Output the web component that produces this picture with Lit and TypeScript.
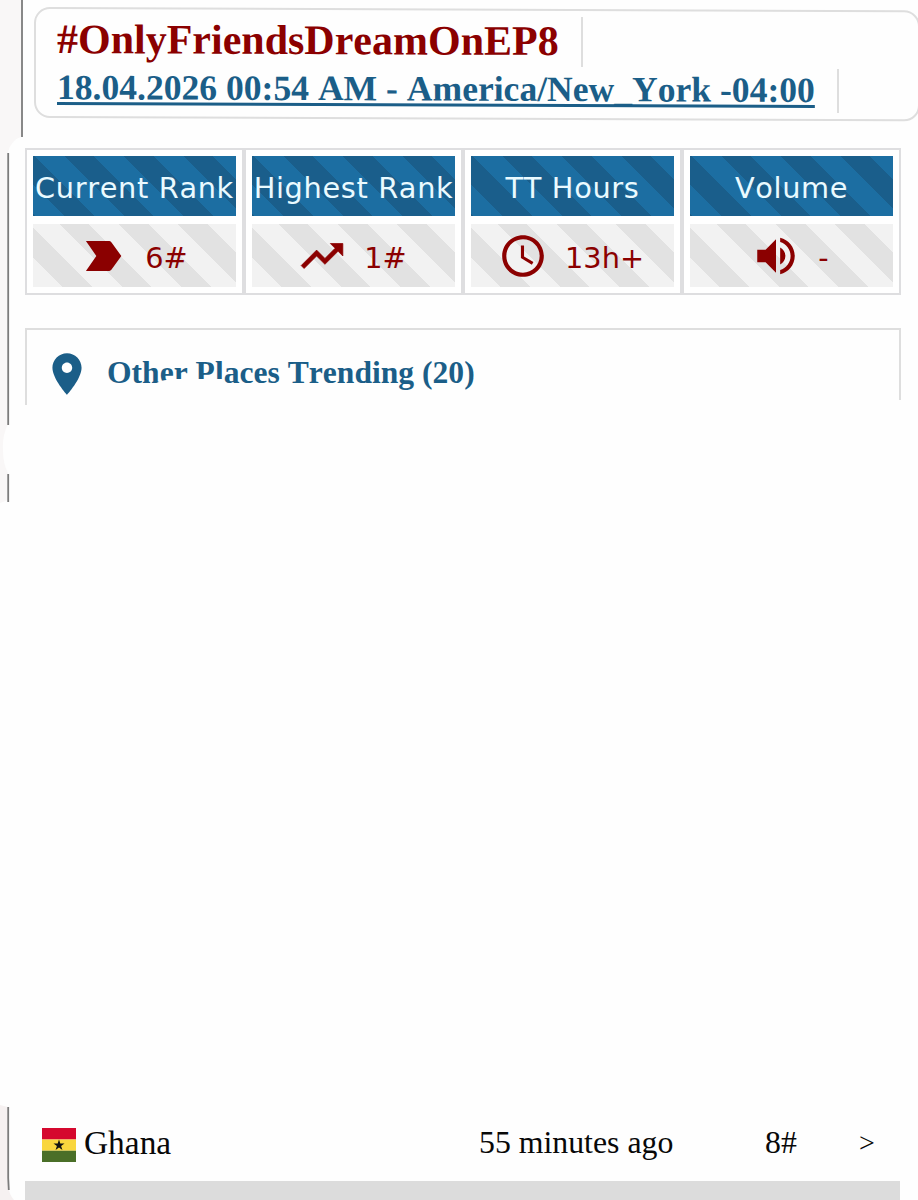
import { LitElement, html, svg, css, TemplateResult } from 'lit';
import { customElement, property } from 'lit/decorators.js';

type IconName = 'label' | 'trend' | 'clock' | 'volume' | 'pin';

interface Stat {
    title: string;
    icon: IconName;
    value: string;
}

interface Place {
    name: string;
    ago: string;
    rank: string;
}

const STATS: Stat[] = [
    { title: 'Current Rank', icon: 'label', value: '6#' },
    { title: 'Highest Rank', icon: 'trend', value: '1#' },
    { title: 'TT Hours', icon: 'clock', value: '13h+' },
    { title: 'Volume', icon: 'volume', value: '-' },
];

const PLACES: Place[] = [{ name: 'Ghana', ago: '55 minutes ago', rank: '8#' }];

// 24x24 grid
const ICONS: Record<IconName, TemplateResult> = {
    label: svg`<path d="M3.8 19.2l5-7.2-5-7.2h10.8c.7 0 1.1.2 1.5.7L20.8 12l-4.7 6.5c-.4.5-.8.7-1.5.7z"/>`,
    trend: svg`<path stroke="currentColor" stroke-width=".35" d="M16 6l2.29 2.29-4.88 4.88-4-4L2 16.59 3.41 18l6-6 4 4 6.3-6.29L22 12V6z"/>`,
    clock: svg`<path d="M11.99 2C6.47 2 2 6.48 2 12s4.47 10 9.99 10C17.52 22 22 17.52 22 12S17.52 2 11.99 2zM12 20c-4.42 0-8-3.58-8-8s3.58-8 8-8 8 3.58 8 8-3.58 8-8 8zm.5-13H11v6l5.25 3.15.75-1.23-4.5-2.67z"/>`,
    volume: svg`<path d="M3 9v6h4l5 5V4L7 9H3zm13.5 3c0-1.77-1.02-3.29-2.5-4.03v8.05c1.48-.73 2.5-2.25 2.5-4.02zM14 3.23v2.06c2.89.86 5 3.54 5 6.71s-2.11 5.85-5 6.71v2.06c4.01-.91 7-4.49 7-8.77s-2.99-7.86-7-8.77z"/>`,
    pin: svg`<path d="M12 2C8.13 2 5 5.13 5 9c0 5.25 7 13 7 13s7-7.75 7-13c0-3.87-3.13-7-7-7zm0 9.5c-1.38 0-2.5-1.12-2.5-2.5s1.12-2.5 2.5-2.5 2.5 1.12 2.5 2.5-1.12 2.5-2.5 2.5z"/>`,
};

@customElement('trend-icon')
export class TrendIcon extends LitElement {
    @property() name: IconName = 'label';

    static styles = css`
        :host {
            display: block;
            width: 50px;
            height: 50px;
        }

        svg {
            display: block;
            width: 100%;
            height: 100%;
            fill: currentColor;
        }
    `;

    render() {
        return html`<svg viewBox="0 0 24 24">${ICONS[this.name]}</svg>`;
    }
}

@customElement('stat-cell')
export class StatCell extends LitElement {
    @property() heading = '';
    @property() icon: IconName = 'label';
    @property() value = '';

    static styles = css`
        :host {
            display: flex;
            flex-direction: column;
            gap: 8px;
            box-sizing: border-box;
            min-width: 0;
            padding: 6px;
            border: 2px solid #dedee0;
            background: #fff;
            font-family: Verdana, 'DejaVu Sans', sans-serif;
            font-size: 28.8px;
            white-space: nowrap;
        }

        .title {
            display: flex;
            align-items: center;
            justify-content: center;
            height: 60px;
            padding-top: 3px;
            box-sizing: border-box;
            letter-spacing: 0.65px;
            color: #eafaff;
            background: repeating-linear-gradient(
                45deg,
                #1a5e8b 0 1.5px,
                #1c6ea2 1.5px 22.5px,
                #1a5e8b 22.5px 42px
            );
        }

        .value {
            display: flex;
            align-items: center;
            justify-content: center;
            gap: 17px;
            box-sizing: border-box;
            height: 63px;
            padding-right: 3px;
            color: #8b0000;
            background: repeating-linear-gradient(
                45deg,
                #f2f2f2 0 21px,
                #e2e2e2 21px 42px
            );
        }

        .value span {
            padding-top: 5px;
        }
    `;

    render() {
        return html`
            <div class="title">${this.heading}</div>
            <div class="value">
                <trend-icon .name=${this.icon}></trend-icon>
                <span>${this.value}</span>
            </div>
        `;
    }
}

@customElement('app-root')
export class AppRoot extends LitElement {
    static styles = css`
        :host {
            display: grid;
            grid-template-columns: 25px 1fr;
            width: 918px;
            height: 1200px;
            overflow: hidden;
            background: #fefefe;
            font-family: 'Liberation Serif', 'Times New Roman', serif;
            font-kerning: none;
        }

        .edge {
            display: block;
            width: 25px;
            height: 1200px;
        }

        main {
            display: flex;
            flex-direction: column;
            min-width: 0;
            height: 1200px;
        }

        /* the whole header card leans slightly to the right */
        .header {
            display: flex;
            flex-direction: column;
            align-items: flex-start;
            box-sizing: border-box;
            flex: none;
            width: 886px;
            height: 111px;
            margin: 7px 0 0 9px;
            padding: 6px 0 0 21px;
            border: 2px solid #dedede;
            border-radius: 16px;
            transform: skewY(0.22deg);
            transform-origin: left;
            font-weight: bold;
            white-space: nowrap;
        }

        .hashtag,
        .date {
            border-right: 2px solid #dedede;
        }

        .hashtag {
            height: 50px;
            padding-right: 22px;
            line-height: 48px;
            font-size: 42px;
            color: #8b0000;
        }

        .date {
            height: 44px;
            margin-top: 1px;
            padding-right: 22px;
            line-height: 42px;
            font-size: 35.6px;
            color: #1b5e88;
        }

        .date a {
            text-decoration: underline;
            text-decoration-thickness: 2.5px;
            text-underline-offset: 3px;
            text-decoration-skip-ink: none;
        }

        .stats {
            display: grid;
            grid-template-columns: repeat(4, 1fr);
            flex: none;
            width: 876px;
            height: 147px;
            margin-top: 30px;
        }

        .places {
            position: relative;
            display: flex;
            align-items: flex-start;
            gap: 15px;
            box-sizing: border-box;
            flex: none;
            width: 876px;
            height: 77px;
            margin-top: 33px;
            padding: 19px 0 0 15px;
            border: 2px solid #dedede;
            border-bottom: none;
            color: #1b5e88;
        }

        .places h2 {
            margin: 6px 0 0;
            line-height: 36px;
            font-size: 31.6px;
            white-space: nowrap;
        }

        .smudge {
            position: absolute;
            left: 0;
            top: 0;
            width: 876px;
            height: 77px;
            fill: #fefefe;
        }

        .rows {
            margin-top: auto;
            width: 876px;
        }

        .row {
            display: grid;
            grid-template-columns: 34px 387px 278px 86px auto;
            align-items: center;
            gap: 8px;
            box-sizing: border-box;
            height: 76px;
            padding-left: 17px;
            font-size: 31.8px;
            color: #080808;
            white-space: nowrap;
        }

        .row .name {
            font-size: 33.4px;
        }

        .row .more {
            font-size: 28px;
        }

        .flag {
            display: block;
            width: 34px;
            height: 34px;
            margin-top: 3px;
        }

        .strip {
            width: 875px;
            height: 19px;
            background: #dcdcdc;
        }
    `;

    private _renderEdge() {
        return html`
            <svg class="edge" viewBox="0 0 25 1200">
                <path
                    fill="#f9f7f7"
                    d="M0 0H21V137C14 139 9 146 8 153V424Q2 436 3 450Q3 464 8 473V500L0 503z"
                />
                <path
                    fill="#f6f1f1"
                    d="M0 1105L8 1107V1184Q9 1195 14 1200H0z"
                />
                <path
                    fill="none"
                    stroke="#7c7c7c"
                    stroke-width="1.8"
                    d="M22 0V137M8.2 153V425M8.2 474V502M8.2 1107V1178L8.8 1190"
                />
            </svg>
        `;
    }

    private _renderPlace(place: Place) {
        return html`
            <div class="row">
                <svg class="flag" viewBox="0 0 34 34">
                    <path fill="#d5082e" d="M0 0h34v11.4H0z" />
                    <path fill="#f9d63e" d="M0 11.4h34v11.4H0z" />
                    <path fill="#4a6f28" d="M0 22.8h34V34H0z" />
                    <path
                        fill="#111"
                        d="M17 11.6l1.3 4h4.2l-3.4 2.5 1.3 4-3.4-2.5-3.4 2.5 1.3-4-3.4-2.5h4.2z"
                    />
                </svg>
                <span class="name">${place.name}</span>
                <span>${place.ago}</span>
                <span>${place.rank}</span>
                <span class="more">&gt;</span>
            </div>
        `;
    }

    render() {
        return html`
            ${this._renderEdge()}
            <main>
                <div class="header">
                    <div class="hashtag">#OnlyFriendsDreamOnEP8</div>
                    <div class="date">
                        <a>18.04.2026 00:54 AM - America/New_York -04:00</a>
                    </div>
                </div>
                <div class="stats">
                    ${STATS.map(
                        (s) => html`
                            <stat-cell
                                .heading=${s.title}
                                .icon=${s.icon}
                                .value=${s.value}
                            ></stat-cell>
                        `,
                    )}
                </div>
                <div class="places">
                    <trend-icon name="pin"></trend-icon>
                    <h2>Other Places Trending (20)</h2>
                    <svg class="smudge" viewBox="0 0 876 77">
                        <path
                            d="M118 58L134 51Q140 49.5 150 49H196V51L206 57V62H118zM866 70h10v7h-10z"
                        />
                    </svg>
                </div>
                <div class="rows">
                    ${PLACES.map((p) => this._renderPlace(p))}
                    <div class="strip"></div>
                </div>
            </main>
        `;
    }
}
